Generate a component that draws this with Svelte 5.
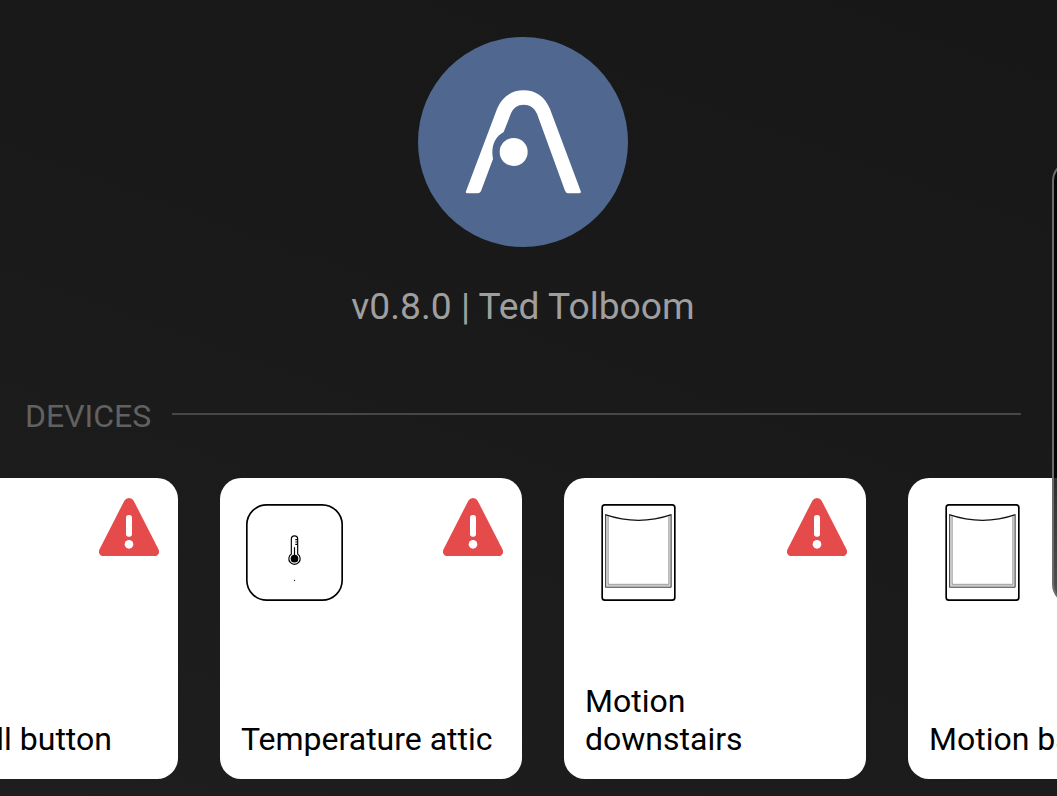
<script lang="ts">
  interface Device {
    name: string;
    icon: "button" | "temperature" | "motion";
    alert: boolean;
  }

  const version = "v0.8.0";
  const author = "Ted Tolboom";

  const devices: Device[] = [
    { name: "Doorbell button", icon: "button", alert: true },
    { name: "Temperature attic", icon: "temperature", alert: true },
    { name: "Motion downstairs", icon: "motion", alert: true },
    { name: "Motion basement", icon: "motion", alert: false },
  ];
</script>

<main class="screen">
  <header class="app-header">
    <svg class="logo" viewBox="24 21 630 630" aria-hidden="true">
      <circle cx="339" cy="336" r="315" fill="#50678f" />
      <path
        fill="#fff"
        d="M168 484L261 237C277 198 307 181 341 181S404 198 420 237L512 483Q514 490 507 490H476Q468 490 465 482L381 251C373 233 359 224 341 224S310 233 303 250L281 306C254 321 242 350 249 387L214 481Q211 490 203 490H172Q166 490 168 484Z"
      />
      <circle cx="311" cy="366" r="42" fill="#fff" />
    </svg>
    <p class="version">{version} | {author}</p>
  </header>

  <div class="section-title">
    <h2>DEVICES</h2>
    <span class="rule"></span>
  </div>

  <div class="devices">
    {#each devices as device}
      <article class="card">
        {#if device.icon === "temperature"}
          <svg class="device-icon" viewBox="33 42 291 291" aria-hidden="true">
            <rect x="35.500" y="44.500" width="286" height="286" rx="60" fill="none" stroke="#000" stroke-width="5" />
            <path d="M169 192V147a9.500 9.500 0 0 1 19 0V192a17 17 0 1 1-19 0Z" fill="none" stroke="#000" stroke-width="3.500" />
            <path d="M178.500 172V206M181 149H187M181 156H187M181 163H187" stroke="#000" stroke-width="3.500" />
            <circle cx="178.500" cy="206" r="11.500" />
            <circle cx="178.500" cy="271" r="2" />
          </svg>
        {:else if device.icon === "motion"}
          <svg class="device-icon" viewBox="0.500 27 291 291" aria-hidden="true">
            <rect x="37" y="29.500" width="218" height="286" rx="8" fill="none" stroke="#000" stroke-width="5" />
            <path d="M50 62V273H242V62" fill="none" stroke="#c8c8c8" stroke-width="6" />
            <path d="M55 64V268H237V64" fill="none" stroke="#666" stroke-width="2" />
            <path d="M47 60V277H244V60" fill="none" stroke="#333" stroke-width="2.500" />
            <path d="M46 59Q146 93 245 59" fill="none" stroke="#111" stroke-width="3.500" />
          </svg>
        {/if}
        {#if device.alert}
          <svg class="alert" viewBox="297 83 180 175" aria-label="Alert">
            <path fill="#e64b4c" d="M373 91Q378 83 387 83T401 91L475 236Q481 248 472 255Q468 258 462 258H312Q306 258 302 255Q293 248 299 236Z" />
            <rect x="378" y="134" width="18" height="65" rx="8" fill="#fff" />
            <circle cx="387" cy="222" r="13" fill="#fff" />
          </svg>
        {/if}
        <p class="name">{device.name}</p>
      </article>
    {/each}
  </div>

  <div class="edge-panel"></div>
</main>

<style>
  :global(body) {
    background: #1a1a1a;
    overflow: hidden;
  }

  .screen {
    position: relative;
    box-sizing: border-box;
    width: 1057px;
    height: 796px;
    padding-top: 37px;
    overflow: hidden;
    background: linear-gradient(200deg, #171717, #1a1a1a 50%, #1e1e1e);
    font-family: Roboto, sans-serif;
  }

  .app-header {
    display: flex;
    flex-direction: column;
    align-items: center;
    width: 1046px;
  }

  .logo {
    width: 210px;
    height: 210px;
  }

  .version {
    margin: 37px 0 0;
    font-size: 37.2px;
    line-height: 44px;
    color: #9f9f9f;
    white-space: nowrap;
  }

  .section-title {
    display: flex;
    align-items: center;
    gap: 21px;
    height: 42px;
    margin: 66px 36px 0 25px;
  }

  h2 {
    margin: 1px 0 0;
    font-size: 32px;
    font-weight: 400;
    line-height: 38px;
    color: #616161;
  }

  .rule {
    flex: 1;
    height: 2px;
    margin-top: -2px;
    background: #474747;
  }

  .devices {
    display: flex;
    gap: 42px;
    margin: 42px 0 0 -124px;
  }

  .card {
    position: relative;
    box-sizing: border-box;
    display: flex;
    flex: none;
    flex-direction: column;
    width: 302px;
    height: 301px;
    padding: 26px 21px 21px;
    border-radius: 21px;
    background: #fff;
  }

  .device-icon {
    width: 97px;
    height: 97px;
    margin-left: 5px;
  }

  .alert {
    position: absolute;
    top: 19.7px;
    right: 19px;
    width: 60px;
    height: 58.3px;
  }

  .name {
    margin: auto 0 0;
    font-size: 32px;
    line-height: 38px;
    color: #000;
  }

  .card:first-child .name {
    margin-left: -4px;
  }

  .edge-panel {
    position: absolute;
    top: 160px;
    left: 1052px;
    box-sizing: border-box;
    width: 60px;
    height: 445px;
    border: 2px solid #6c6c6c;
    border-radius: 21px;
    background: linear-gradient(rgba(0, 0, 0, 0.85) 65%, rgba(0, 0, 0, 0.68));
  }
</style>
